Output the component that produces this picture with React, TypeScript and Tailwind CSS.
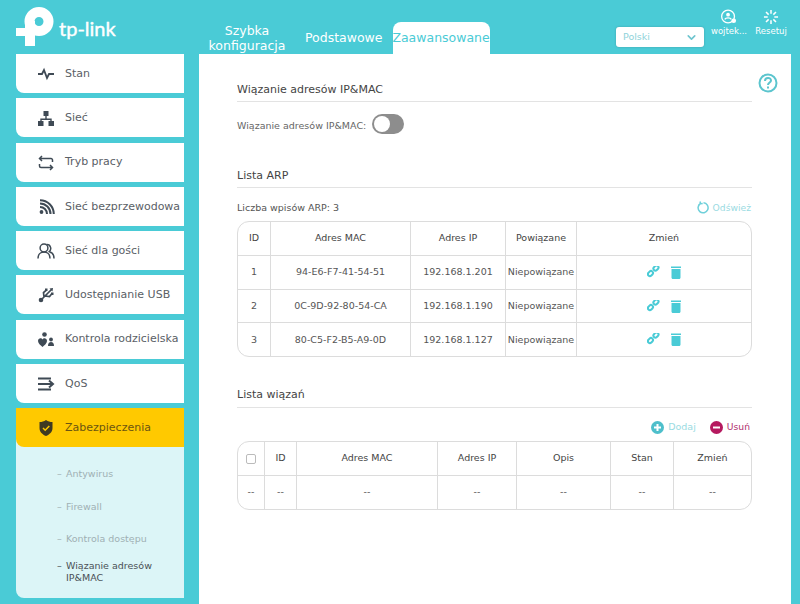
import { ChevronDown } from 'lucide-react';
import type { ReactNode } from 'react';

const font = { fontFamily: '"DejaVu Sans", Verdana, sans-serif' };

function Logo() {
  return (
    <svg width="38" height="39" viewBox="0 0 38 39" fill="#fff">
      <circle cx="23" cy="14.500" r="9.500" fill="none" stroke="#fff" strokeWidth="10" />
      <path d="M9 14h10v25H9zM0 21h15v8H0z" />
    </svg>
  );
}

const menuIcons: Record<string, ReactNode> = {
  Stan: (
    <svg width="18" height="18" viewBox="0 0 18 18" fill="none" stroke="#3f4a55" strokeWidth="1.800">
      <path d="M1 9h4l2-4 3 8 2-4h5" />
    </svg>
  ),
  'Sieć': (
    <svg width="18" height="18" viewBox="0 0 18 18" fill="#3f4a55">
      <path d="M6.500 2h5v5h-5zM1 12h5.500v5H1zM11.500 12H17v5h-5.500z" />
      <path d="M8.300 7h1.400v2.500h5v3h-1.400v-1.600H4.700v1.600H3.300v-3h5z" />
    </svg>
  ),
  'Tryb pracy': (
    <svg width="18" height="18" viewBox="0 0 18 18" fill="none" stroke="#3f4a55" strokeWidth="1.500">
      <path d="M5 2 2.500 4.500 5 7M2.500 4.500H14a1.500 1.500 0 0 1 1.500 1.500v2M13 11l2.500 2.500L13 16M15.500 13.500H4A1.500 1.500 0 0 1 2.500 12v-2" />
    </svg>
  ),
  'Sieć bezprzewodowa': (
    <svg width="18" height="18" viewBox="0 0 18 18" fill="none" stroke="#3f4a55" strokeWidth="2">
      <circle cx="4.500" cy="14" r="1.900" fill="#3f4a55" stroke="none" />
      <path d="M3 9a7 7 0 0 1 7 7M3 5.500A10.500 10.500 0 0 1 13.500 16M3 2.200A13.800 13.800 0 0 1 16.800 16" />
    </svg>
  ),
  'Sieć dla gości': (
    <svg width="18" height="18" viewBox="0 0 18 18" fill="none" stroke="#3f4a55" strokeWidth="1.500">
      <circle cx="7" cy="6" r="3.900" />
      <path d="M9.500 2.500a3.900 3.900 0 0 1 2 7.400M1 16.500c0-4 2.500-6.500 6-6.500s6 2.500 6 6.500M12.500 10c2.800.5 4.500 3 4.500 6.500" />
    </svg>
  ),
  'Udostępnianie USB': (
    <svg width="18" height="18" viewBox="0 0 18 18" fill="#3f4a55" stroke="#3f4a55">
      <circle cx="4" cy="14" r="2.300" stroke="none" />
      <path d="M4 14 14.500 3.500M7 11 6.500 6.500 9.500 4M8 10l4.500.5 2.500-3" fill="none" strokeWidth="1.700" />
      <path d="M12.500 2.500 16 2l-.5 3.500z" stroke="none" />
      <path d="M8 2.500h2.500V5H8zM14 6.500h2.500V9H14z" stroke="none" />
    </svg>
  ),
  'Kontrola rodzicielska': (
    <svg width="18" height="18" viewBox="0 0 18 18" fill="#3f4a55">
      <circle cx="7.500" cy="3.500" r="2.300" />
      <path d="M1 10c0-3 3.500-3.500 4.500-1.500C6.500 6.500 10 7 10 10c0 2.500-3 4.500-4.500 6C4 14.500 1 12.500 1 10z" />
      <circle cx="14" cy="8.500" r="1.900" />
      <path d="M11 15c0-2.500 1.200-4 3-4s3 1.500 3 4z" />
    </svg>
  ),
  QoS: (
    <svg width="18" height="18" viewBox="0 0 18 18" fill="none" stroke="#3f4a55" strokeWidth="2">
      <path d="M1 3.500h13M1 9h14M1 14.500h13M12 5.500 16 9l-4 3.500" />
    </svg>
  ),
  Zabezpieczenia: (
    <svg width="18" height="18" viewBox="0 0 18 18">
      <path d="M9 1c2 1.500 4 2 6.500 2v6c0 4-3 6.500-6.500 8-3.500-1.500-6.500-4-6.500-8V3C5 3 7 2.500 9 1z" fill="#3f3a22" />
      <path d="m6 9 2.200 2.200L12.300 7" fill="none" stroke="#ffc900" strokeWidth="1.500" />
    </svg>
  ),
};

const menu = ['Stan', 'Sieć', 'Tryb pracy', 'Sieć bezprzewodowa', 'Sieć dla gości', 'Udostępnianie USB', 'Kontrola rodzicielska', 'QoS'];
const subMenu = ['Antywirus', 'Firewall', 'Kontrola dostępu'];

const arpRows = [
  ['1', '94-E6-F7-41-54-51', '192.168.1.201'],
  ['2', '0C-9D-92-80-54-CA', '192.168.1.190'],
  ['3', '80-C5-F2-B5-A9-0D', '192.168.1.127'],
];

function LinkIcon() {
  return (
    <svg width="13" height="13" viewBox="0 0 13 13" fill="none" stroke="#4acbd6" strokeWidth="2">
      <rect x="0" y="-2" width="5.500" height="4" rx="2" transform="translate(1.500 9.500) rotate(-45)" />
      <rect x="0" y="-2" width="5.500" height="4" rx="2" transform="translate(7 4) rotate(-45)" />
    </svg>
  );
}

function TrashIcon() {
  return (
    <svg width="10" height="13" viewBox="0 0 10 13" fill="#4acbd6">
      <path d="M0 0.500h10V2H0zM0.500 3h9v8.500c0 .8-.5 1.500-1.500 1.500H2c-1 0-1.500-.7-1.500-1.500z" />
    </svg>
  );
}

function SectionTitle({ children }: { children: ReactNode }) {
  return <h2 className="text-[11px] text-[#444] pb-[3px] border-b border-[#e3e3e3] leading-[17px]">{children}</h2>;
}

const th = 'border-l first:border-l-0 border-[#dcdcdc] font-normal text-[9.500px] text-[#444] h-[33px] p-0';
const td = 'border-l first:border-l-0 border-t border-[#dcdcdc] text-[9.500px] text-[#555] h-[33.700px] p-0 text-center';

export default function App() {
  return (
    <div className="w-[800px] h-[604px] overflow-hidden bg-[#4acbd6] flex flex-col" style={font}>
      <header className="h-[54px] flex shrink-0">
        <div className="w-[199px] pl-4 pt-[7px] flex items-start">
          <Logo />
          <span className="ml-[5px] mt-[9px] text-white text-[20px] leading-6 [-webkit-text-stroke:0.4px_white]" style={{ fontFamily: 'Lato, sans-serif' }}>tp-link</span>
        </div>
        <nav className="flex items-end text-white text-[12.500px]">
          <div className="w-[96px] text-center leading-[15px] mb-[1px]">Szybka<br />konfiguracja</div>
          <div className="ml-[10px] mb-[8px] leading-4">Podstawowe</div>
          <div className="ml-[10px] w-[97px] h-[32px] bg-white rounded-t-lg text-[#4acbd6] flex items-center justify-center pt-[1px] whitespace-nowrap">Zaawansowane</div>
        </nav>
        <div className="ml-auto flex items-start pr-[14px]">
          <div className="mt-[27px] w-[88px] h-[20px] bg-white rounded-[3px] shadow-[0_0_2px_rgba(60,120,130,0.6)] flex items-center justify-between pl-[7px] pr-1.5 text-[9.500px] text-[#8fd3da]">
            Polski
            <ChevronDown size={13} strokeWidth={3} className="text-[#6fc5cf]" />
          </div>
          <div className="ml-[7px] mt-[9px] w-[36px] flex flex-col items-center text-white text-[8.500px]">
            <svg width="18" height="16" viewBox="0 0 18 17" fill="none" stroke="#fff" strokeWidth="1.400">
              <circle cx="8" cy="8" r="6.800" />
              <circle cx="8" cy="6" r="2" fill="#fff" stroke="none" />
              <path d="M4.500 11c1-2 6-2 7 0" />
              <circle cx="14" cy="12.500" r="2.500" fill="#fff" stroke="none" />
            </svg>
            <span className="mt-[1px] leading-[10px] whitespace-nowrap">wojtek...</span>
          </div>
          <div className="ml-[9px] mt-[9px] w-[30px] flex flex-col items-center text-white text-[8.500px]">
            <svg width="16" height="16" viewBox="0 0 17 17" fill="none" stroke="#fff" strokeWidth="1.600">
              <path d="M8.500 1v4M8.500 12v4M1 8.500h4M12 8.500h4M3.200 3.200 6 6M11 11l2.800 2.800M13.800 3.200 11 6M6 11l-2.800 2.800" />
            </svg>
            <span className="mt-[1px] leading-[10px]">Resetuj</span>
          </div>
        </div>
      </header>

      <div className="flex flex-1 min-h-0">
        <aside className="w-[199px] shrink-0 pl-4 pr-[15px] flex flex-col gap-[5.250px]">
          {menu.map((name) => (
            <div key={name} className="h-[39px] pt-[1px] bg-white rounded-bl-lg flex items-center text-[11px] text-[#5a6066] shrink-0">
              <span className="w-[49px] pl-[21px] flex">{menuIcons[name]}</span>
              <span className="whitespace-nowrap">{name}</span>
            </div>
          ))}
          <div className="rounded-bl-lg bg-[#dcf5f7] h-[190px] shrink-0">
            <div className="h-[39px] pt-[1px] bg-[#ffc900] rounded-bl-lg flex items-center text-[11px] text-[#6b5511]">
              <span className="w-[49px] pl-[21px] flex">{menuIcons.Zabezpieczenia}</span>
              Zabezpieczenia
            </div>
            <ul className="pt-[21px] pl-[41px] text-[9.500px] text-[#9fb0b4] flex flex-col gap-[20.500px]">
              {subMenu.map((s) => (
                <li key={s} className="relative leading-3">
                  <span className="absolute left-0">–</span>
                  <span className="ml-[9px]">{s}</span>
                </li>
              ))}
            </ul>
            <div className="relative mt-[15px] pl-[50px] text-[9.500px] leading-[12px] text-[#4a5056]">
              <span className="absolute left-[41px]">–</span>
              Wiązanie adresów<br />IP&amp;MAC
            </div>
          </div>
        </aside>

        <main className="w-[592px] bg-white pl-[38px] pr-[39px] pt-[27px] relative">
          <svg className="absolute right-[13px] top-[19px]" width="20" height="20" viewBox="0 0 20 20" fill="none" stroke="#5cc5ce" strokeWidth="2">
            <circle cx="10" cy="10" r="8.500" />
            <path d="M7 8c0-4 6-4 6-.500 0 2-3 2-3 4.500M10 13.500v2" />
          </svg>

          <SectionTitle>Wiązanie adresów IP&amp;MAC</SectionTitle>
          <div className="flex items-center mt-[11px] h-[22px] text-[9.500px] text-[#666]">
            <span className="mt-[5px]">Wiązanie adresów IP&amp;MAC:</span>
            <span className="ml-[6px] w-[32px] h-[20px] rounded-full bg-[#8d8d8d] p-[2px] flex">
              <span className="w-[16px] h-[16px] rounded-full bg-white" />
            </span>
          </div>

          <div className="mt-[32px]"><SectionTitle>Lista ARP</SectionTitle></div>
          <div className="flex justify-between items-center mt-[13px] h-[14px] text-[9.500px] text-[#555]">
            Liczba wpisów ARP: 3
            <span className="flex items-center gap-[4px] pr-[1px] text-[9.200px] text-[#9adbe2]">
              <svg width="12" height="13" viewBox="0 0 12 13" fill="none" stroke="#6fd0da" strokeWidth="1.500">
                <path d="M3.500 2.500a5 5 0 1 0 3-.700M3 0.500l.5 2.200 2.200-.3" />
              </svg>
              Odśwież
            </span>
          </div>
          <div className="mt-[6px] border border-[#dcdcdc] rounded-xl overflow-hidden">
            <table className="w-full border-separate border-spacing-0 table-fixed text-center">
              <colgroup>
                <col className="w-[32px]" /><col className="w-[140px]" /><col className="w-[95px]" /><col className="w-[71px]" /><col />
              </colgroup>
              <thead>
                <tr>
                  {['ID', 'Adres MAC', 'Adres IP', 'Powiązane', 'Zmień'].map((h) => <th key={h} className={th}>{h}</th>)}
                </tr>
              </thead>
              <tbody>
                {arpRows.map((r) => (
                  <tr key={r[0]}>
                    {r.map((c) => <td key={c} className={td}>{c}</td>)}
                    <td className={td}>Niepowiązane</td>
                    <td className={td}>
                      <span className="flex items-center justify-center gap-[11px]"><LinkIcon /><TrashIcon /></span>
                    </td>
                  </tr>
                ))}
              </tbody>
            </table>
          </div>

          <div className="mt-[29px]"><h2 className="text-[11px] text-[#444] pb-[4px] border-b border-[#e3e3e3] leading-[17px]">Lista wiązań</h2></div>
          <div className="flex justify-end items-center gap-[14px] pr-[2px] mt-[12px] h-[14px] text-[9.500px]">
            <span className="flex items-center gap-[4px] text-[#9adbe2]">
              <svg width="13" height="13" viewBox="0 0 13 13">
                <circle cx="6.500" cy="6.500" r="6.500" fill="#4ebfcb" />
                <path d="M6.500 3v7M3 6.500h7" stroke="#fff" strokeWidth="2" />
              </svg>
              Dodaj
            </span>
            <span className="flex items-center gap-[4px] text-[9.200px] text-[#b0306f]">
              <svg width="13" height="13" viewBox="0 0 13 13">
                <circle cx="6.500" cy="6.500" r="6.500" fill="#b5195f" />
                <path d="M3 6.500h7" stroke="#fff" strokeWidth="2" />
              </svg>
              Usuń
            </span>
          </div>
          <div className="mt-[7px] border border-[#dcdcdc] rounded-xl overflow-hidden">
            <table className="w-full border-separate border-spacing-0 table-fixed text-center">
              <colgroup>
                <col className="w-[26px]" /><col className="w-[32px]" /><col className="w-[141px]" /><col className="w-[79px]" /><col className="w-[94px]" /><col className="w-[63px]" /><col />
              </colgroup>
              <thead>
                <tr>
                  <th className={th}>
                    <span className="inline-block align-middle w-[10px] h-[10px] border border-[#bbb] rounded-[2px]" />
                  </th>
                  {['ID', 'Adres MAC', 'Adres IP', 'Opis', 'Stan', 'Zmień'].map((h) => <th key={h} className={th}>{h}</th>)}
                </tr>
              </thead>
              <tbody>
                <tr>
                  {[0, 1, 2, 3, 4, 5, 6].map((i) => <td key={i} className={td}>--</td>)}
                </tr>
              </tbody>
            </table>
          </div>
        </main>
      </div>
    </div>
  );
}
